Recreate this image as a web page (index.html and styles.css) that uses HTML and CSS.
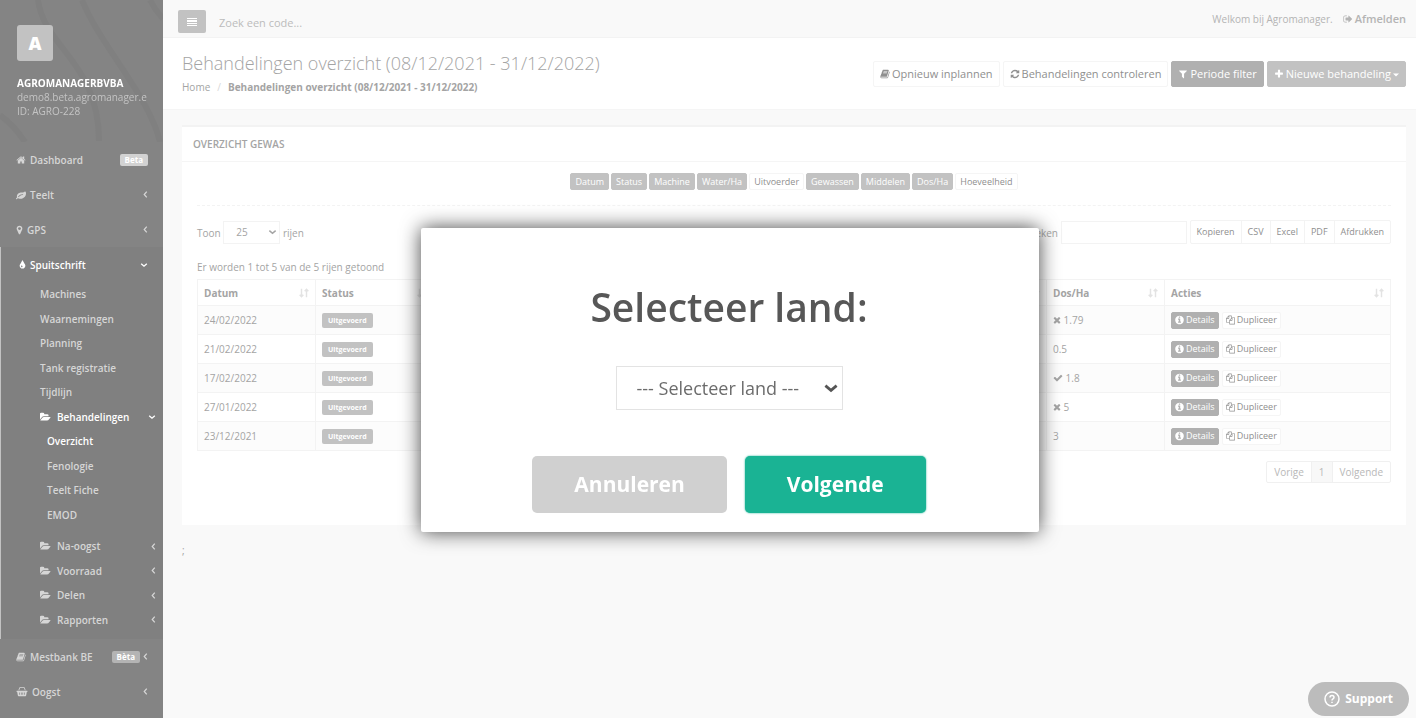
FILE: index.html
```html
<!DOCTYPE html>
<html lang="nl">
<head>
    <meta charset="UTF-8">
    <title>Behandelingen overzicht</title>
    <link rel="stylesheet" href="styles.css">
</head>
<body>
    <svg class="sprite" aria-hidden="true">
        <symbol id="home" viewBox="0 0 1792 1792"><path d="M1472 992v480q0 26-19 45t-45 19h-384v-384h-256v384h-384q-26 0-45-19t-19-45v-480q0-1 .5-3t.5-3l575-474 575 474q1 2 1 6zm223-69l-62 74q-8 9-21 11h-3q-13 0-21-7l-692-577-692 577q-12 8-24 7-13-2-21-11l-62-74q-8-10-7-23.5t11-21.5l719-599q32-26 76-26t76 26l244 204v-195q0-14 9-23t23-9h192q14 0 23 9t9 23v408l219 182q10 8 11 21.5t-7 23.5z"/></symbol>
        <symbol id="leaf" viewBox="0 0 1792 1792"><path d="M1280 832q0-26-19-45t-45-19q-172 0-318 49.5t-259.5 134-235.5 219.5q-19 21-19 45 0 26 19 45t45 19q24 0 45-19 27-24 74-71t67-66q137-124 268.5-176t313.5-52q26 0 45-19t19-45zm512-198q0 95-20 193-46 224-184.5 383t-357.5 268q-214 108-438 108-148 0-286-47-15-5-88-42t-96-37q-16 0-39.5 32t-45 70-52.5 70-60 32q-43 0-63.5-17.5t-45.5-59.5q-2-4-6-11t-5.5-10-3-9.5-1.5-13.5q0-35 31-73.5t68-65.5 68-56 31-48q0-4-14-38t-16-44q-9-51-9-104 0-115 43.5-220t119-184.5 170.5-139 204-95.5q55-18 145-25.5t179.5-9 178.5-6 163.5-24 113.5-56.5l29.5-29.5 29.5-28 27-20 36.5-16 43.5-4.5q39 0 70.5 46t47.5 112 24 124 8 96z"/></symbol>
        <symbol id="marker" viewBox="384 0 1024 1792"><path d="M1152 640q0-106-75-181t-181-75-181 75-75 181 75 181 181 75 181-75 75-181zm256 0q0 109-33 179l-364 774q-16 33-47.5 52t-67.5 19-67.5-19-46.5-52l-365-774q-33-70-33-179 0-212 150-362t362-150 362 150 150 362z"/></symbol>
        <symbol id="tint" viewBox="384 0 1024 1792"><path d="M896 1152q0-36-20-69-1-1-15.5-22.5t-25.5-38-25-44-21-50.5q-4-16-21-16t-21 16q-7 23-21 50.5t-25 44-25.5 38-15.5 22.5q-20 33-20 69 0 53 37.5 90.5t90.5 37.5 90.5-37.5 37.5-90.5zm512-128q0 212-150 362t-362 150-362-150-150-362q0-145 81-275 6-9 62.5-90.5t101-151 99.5-178 83-201.5q9-30 34-47t51-17 51.5 17 33.5 47q28 93 83 201.5t99.5 178 101 151 62.5 90.5q81 127 81 275z"/></symbol>
        <symbol id="book" viewBox="0 0 1792 1792"><path d="M1703 478q40 57 18 129l-275 906q-19 64-76.5 107.5t-122.5 43.5h-923q-77 0-148.5-53.5t-99.5-131.5q-24-67-2-127 0-4 3-27t4-37q1-8-3-21.5t-3-19.5q2-11 8-21t16.5-23.5 16.5-23.5q23-38 45-91.5t30-91.5q3-10 .5-30t-.5-28q3-11 17-28t17-23q21-36 42-92t25-90q1-9-2.5-32t.5-28q4-13 22-30.5t22-22.5q19-26 42.5-84.5t27.5-96.5q1-8-3-25.5t-2-26.5q2-8 9-18t18-23 17-21q8-12 16.5-30.5t15-35 16-36 19.5-32 26.5-23.5 36-11.5 47.5 5.5l-1 3q38-9 51-9h761q74 0 114 56t18 130l-274 906q-36 119-71.5 153.5t-128.5 34.5h-869q-27 0-38 15-11 16-1 43 24 70 144 70h923q29 0 56-15.5t35-41.5l300-987q7-22 5-57 38 15 59 43zm-1064 2q-4 13 2 22.5t20 9.5h608q13 0 25.5-9.5t16.5-22.5l21-64q4-13-2-22.5t-20-9.5h-608q-13 0-25.5 9.5t-16.5 22.5zm-83 256q-4 13 2 22.5t20 9.5h608q13 0 25.5-9.5t16.5-22.5l21-64q4-13-2-22.5t-20-9.5h-608q-13 0-25.5 9.5t-16.5 22.5z"/></symbol>
        <symbol id="basket" viewBox="0 0 1792 1792"><path fill-rule="evenodd" d="M64 768h1664q64 0 64 64v64q0 64-64 64h-50l-108 600q-14 104-124 104H346q-110 0-124-104L114 960H64q-64 0-64-64v-64q0-64 64-64zM420 1060l30 380h110l-30-380zM720 1060v380h110v-380zM970 1060v380h110v-380zM1270 1060l-30 380h110l30-380z"/><path d="M300 700L480 240q30-70 110-70h620q80 0 110 70l180 460h-140L1200 300H600L440 700z"/></symbol>
        <symbol id="folder" viewBox="0 0 1850 1792"><path d="M1815 952q0 31-31 66l-336 396q-43 51-120.5 86.5t-143.5 35.5h-1088q-34 0-60.5-13t-26.5-43q0-31 31-66l336-396q43-51 120.5-86.5t143.5-35.5h1088q34 0 60.5 13t26.5 43zm-343-344v160h-832q-94 0-197 47.5t-164 119.5l-337 396-5 6q0-4-.5-12.5t-.5-12.5v-960q0-92 66-158t158-66h320q92 0 158 66t66 158v32h544q92 0 158 66t66 158z"/></symbol>
        <symbol id="refresh" viewBox="0 0 1792 1792"><path d="M1639 1056q0 5-1 7-64 268-268 434.5t-478 166.5q-146 0-282.5-55t-243.5-157l-129 129q-19 19-45 19t-45-19-19-45v-448q0-26 19-45t45-19h448q26 0 45 19t19 45-19 45l-137 137q71 66 161 102t187 36q134 0 250-65t186-179q11-17 53-117 8-23 30-23h192q13 0 22.5 9.5t9.5 22.5zm25-800v448q0 26-19 45t-45 19h-448q-26 0-45-19t-19-45 19-45l138-138q-148-137-349-137-134 0-250 65t-186 179q-11 17-53 117-8 23-30 23h-199q-13 0-22.5-9.5t-9.5-22.5v-7q65-268 270-434.5t480-166.5q146 0 284 55.5t245 156.5l130-129q19-19 45-19t45 19 19 45z"/></symbol>
        <symbol id="filter" viewBox="128 0 1536 1792"><path d="M1595 295q17 41-14 70l-493 493v742q0 42-39 59-13 5-25 5-27 0-45-19l-256-256q-19-19-19-45v-486l-493-493q-31-29-14-70 17-39 59-39h1280q42 0 59 39z"/></symbol>
        <symbol id="plus" viewBox="128 0 1536 1792"><path d="M1600 736v192q0 40-28 68t-68 28h-416v416q0 40-28 68t-68 28h-192q-40 0-68-28t-28-68v-416h-416q-40 0-68-28t-28-68v-192q0-40 28-68t68-28h416v-416q0-40 28-68t68-28h192q40 0 68 28t28 68v416h416q40 0 68 28t28 68z"/></symbol>
        <symbol id="times" viewBox="192 0 1408 1792"><path d="M1490 1322q0 40-28 68l-136 136q-28 28-68 28t-68-28l-294-294-294 294q-28 28-68 28t-68-28l-136-136q-28-28-28-68t28-68l294-294-294-294q-28-28-28-68t28-68l136-136q28-28 68-28t68 28l294 294 294-294q28-28 68-28t68 28l136 136q28 28 28 68t-28 68l-294 294 294 294q28 28 28 68z"/></symbol>
        <symbol id="check" viewBox="0 0 1792 1792"><path d="M1671 566q0 40-28 68l-724 724-136 136q-28 28-68 28t-68-28l-136-136-362-362q-28-28-28-68t28-68l136-136q28-28 68-28t68 28l294 295 656-657q28-28 68-28t68 28l136 136q28 28 28 68z"/></symbol>
        <symbol id="info" viewBox="128 0 1536 1792"><path d="M1152 1376v-160q0-14-9-23t-23-9h-96v-512q0-14-9-23t-23-9h-320q-14 0-23 9t-9 23v160q0 14 9 23t23 9h96v320h-96q-14 0-23 9t-9 23v160q0 14 9 23t23 9h448q14 0 23-9t9-23zm-128-896v-160q0-14-9-23t-23-9h-192q-14 0-23 9t-9 23v160q0 14 9 23t23 9h192q14 0 23-9t9-23zm640 416q0 209-103 385.5t-279.5 279.5-385.5 103-385.5-103-279.5-279.5-103-385.5 103-385.5 279.5-279.5 385.5-103 385.5 103 279.5 279.5 103 385.5z"/></symbol>
        <symbol id="files" viewBox="0 0 1792 1792"><path d="M1696 384q40 0 68 28t28 68v1216q0 40-28 68t-68 28h-960q-40 0-68-28t-28-68v-288h-544q-40 0-68-28t-28-68v-672q0-40 20-88t48-76l408-408q28-28 76-48t88-20h416q40 0 68 28t28 68v328q68-40 128-40h416zm-544 213l-299 299h299v-299zm-640-384l-299 299h299v-299zm196 647l316-316v-416h-384v416q0 40-28 68t-68 28h-416v640h512v-256q0-40 20-88t48-76zm956 804v-1152h-384v416q0 40-28 68t-68 28h-416v640h896z"/></symbol>
        <symbol id="signout" viewBox="0 0 1792 1792"><path d="M704 1440q0 4 1 20t.5 26.5-3 23.5-10 19.5-20.5 6.5h-320q-119 0-203.5-84.5t-84.5-203.5v-704q0-119 84.5-203.5t203.5-84.5h320q13 0 22.5 9.5t9.5 22.5q0 4 1 20t.5 26.5-3 23.5-10 19.5-20.5 6.5h-320q-66 0-113 47t-47 113v704q0 66 47 113t113 47h312l11.5 1 11.5 3 8 5.5 7 9 2 13.5zm928-544q0 26-19 45l-544 544q-19 19-45 19t-45-19-19-45v-288h-448q-26 0-45-19t-19-45v-384q0-26 19-45t45-19h448v-288q0-26 19-45t45-19 45 19l544 544q19 19 19 45z"/></symbol>
        <symbol id="bars" viewBox="0 0 10 10"><path d="M0 1h10v1H0zM0 3h10v2H0zM0 6h10v1H0zM0 8h10v1H0z"/></symbol>
        <symbol id="left" viewBox="0 0 6 10"><path d="M4.500 1.500L1.500 5l3 3.500" fill="none" stroke="currentColor" stroke-width="1.500"/></symbol>
        <symbol id="down" viewBox="0 0 10 6"><path d="M1.500 1.500L5 4.500l3.500-3" fill="none" stroke="currentColor" stroke-width="1.700"/></symbol>
        <symbol id="sort" viewBox="0 0 12 12"><path d="M3 1v9M.800 8L3 10.500 5.200 8M9 11V2M6.800 4L9 1.500 11.200 4" fill="none" stroke="currentColor" stroke-width="1.700"/></symbol>
        <symbol id="caret" viewBox="0 0 6 4"><path d="M0 .500h6L3 3.500z"/></symbol>
    </svg>

    <div class="wrapper">
        <nav class="sidebar">
            <div class="profile">
                <svg class="pattern" viewBox="0 0 163 143" preserveAspectRatio="none" aria-hidden="true">
                    <path d="M38 0c6 48 61 62 61 142M82 0c16 42 68 98 78 143M0 116q14 10 25 27M150 0q5 10 13 19"/>
                </svg>
                <div class="avatar">A</div>
                <strong>AGROMANAGERBVBA</strong>
                <span>demo8.beta.agromanager.e</span>
                <span>ID: AGRO-228</span>
            </div>
            <ul class="menu">
                <li><a href="#"><svg class="icon"><use href="#home"/></svg>Dashboard<span class="badge">Beta</span></a></li>
                <li><a href="#"><svg class="icon"><use href="#leaf"/></svg>Teelt<svg class="arrow"><use href="#left"/></svg></a></li>
                <li><a href="#"><svg class="icon narrow"><use href="#marker"/></svg>GPS<svg class="arrow"><use href="#left"/></svg></a></li>
                <li class="open">
                    <a href="#" class="current"><svg class="icon narrow"><use href="#tint"/></svg>Spuitschrift<svg class="arrow down"><use href="#down"/></svg></a>
                    <ul class="submenu">
                        <li><a href="#">Machines</a></li>
                        <li><a href="#">Waarnemingen</a></li>
                        <li><a href="#">Planning</a></li>
                        <li><a href="#">Tank registratie</a></li>
                        <li><a href="#">Tijdlijn</a></li>
                        <li>
                            <a href="#" class="current"><svg class="icon folder"><use href="#folder"/></svg>Behandelingen<svg class="arrow down"><use href="#down"/></svg></a>
                            <ul class="thirdmenu">
                                <li><a href="#" class="current">Overzicht</a></li>
                                <li><a href="#">Fenologie</a></li>
                                <li><a href="#">Teelt Fiche</a></li>
                                <li><a href="#">EMOD</a></li>
                            </ul>
                        </li>
                        <li><a href="#"><svg class="icon folder"><use href="#folder"/></svg>Na-oogst<svg class="arrow"><use href="#left"/></svg></a></li>
                        <li><a href="#"><svg class="icon folder"><use href="#folder"/></svg>Voorraad<svg class="arrow"><use href="#left"/></svg></a></li>
                        <li><a href="#"><svg class="icon folder"><use href="#folder"/></svg>Delen<svg class="arrow"><use href="#left"/></svg></a></li>
                        <li><a href="#"><svg class="icon folder"><use href="#folder"/></svg>Rapporten<svg class="arrow"><use href="#left"/></svg></a></li>
                    </ul>
                </li>
                <li><a href="#"><svg class="icon"><use href="#book"/></svg>Mestbank BE<span class="badge dark">Bèta</span><svg class="arrow near"><use href="#left"/></svg></a></li>
                <li><a href="#"><svg class="icon basket"><use href="#basket"/></svg>Oogst<svg class="arrow"><use href="#left"/></svg></a></li>
            </ul>
        </nav>

        <div class="page">
            <header class="topbar">
                <button class="toggle" aria-label="Menu"><svg class="icon"><use href="#bars"/></svg></button>
                <input class="search" type="text" placeholder="Zoek een code..." aria-label="Zoek een code">
                <span class="welcome">Welkom bij Agromanager.</span>
                <a href="#" class="logout"><svg class="icon"><use href="#signout"/></svg>Afmelden</a>
            </header>

            <div class="heading">
                <div>
                    <h1>Behandelingen overzicht (08/12/2021 - 31/12/2022)</h1>
                    <div class="breadcrumb"><a href="#">Home</a><span>/</span><strong>Behandelingen overzicht (08/12/2021 - 31/12/2022)</strong></div>
                </div>
                <div class="actions">
                    <button class="btn"><svg class="icon"><use href="#book"/></svg>Opnieuw inplannen</button>
                    <button class="btn"><svg class="icon"><use href="#refresh"/></svg>Behandelingen controleren</button>
                    <button class="btn dark"><svg class="icon"><use href="#filter"/></svg>Periode filter</button>
                    <button class="btn grey"><svg class="icon"><use href="#plus"/></svg>Nieuwe behandeling<svg class="caret"><use href="#caret"/></svg></button>
                </div>
            </div>

            <main class="content">
                <section class="panel">
                    <h2>OVERZICHT GEWAS</h2>
                    <div class="panel-body">
                        <div class="columns">
                            <button class="btn-xs grey">Datum</button>
                            <button class="btn-xs grey">Status</button>
                            <button class="btn-xs grey">Machine</button>
                            <button class="btn-xs grey">Water/Ha</button>
                            <button class="btn-xs">Uitvoerder</button>
                            <button class="btn-xs grey">Gewassen</button>
                            <button class="btn-xs grey">Middelen</button>
                            <button class="btn-xs grey">Dos/Ha</button>
                            <button class="btn-xs">Hoeveelheid</button>
                        </div>
                        <div class="tools">
                            <label class="length">Toon
                                <span class="select"><select><option>25</option></select><svg><use href="#down"/></svg></span>
                                rijen</label>
                            <label class="find">Zoeken <input type="search"></label>
                            <div class="group">
                                <button>Kopieren</button><button>CSV</button><button>Excel</button><button>PDF</button><button>Afdrukken</button>
                            </div>
                        </div>
                        <p class="info">Er worden 1 tot 5 van de 5 rijen getoond</p>
                        <table>
                            <colgroup><col class="c-date"><col class="c-date"><col><col><col><col><col class="c-date"><col class="c-act"></colgroup>
                            <thead>
                                <tr>
                                    <th>Datum<svg><use href="#sort"/></svg></th>
                                    <th>Status<svg><use href="#sort"/></svg></th>
                                    <th aria-label="Machine"><svg><use href="#sort"/></svg></th>
                                    <th aria-label="Water/Ha"><svg><use href="#sort"/></svg></th>
                                    <th aria-label="Gewassen"><svg><use href="#sort"/></svg></th>
                                    <th aria-label="Middelen"><svg><use href="#sort"/></svg></th>
                                    <th>Dos/Ha<svg><use href="#sort"/></svg></th>
                                    <th>Acties<svg><use href="#sort"/></svg></th>
                                </tr>
                            </thead>
                            <tbody>
                                <tr>
                                    <td>24/02/2022</td><td><span class="label">Uitgevoerd</span></td><td></td><td></td><td></td><td></td>
                                    <td><svg class="icon narrow"><use href="#times"/></svg> 1.79</td>
                                    <td><button class="btn-xs dark"><svg class="icon"><use href="#info"/></svg>Details</button><button class="btn-xs"><svg class="icon"><use href="#files"/></svg>Dupliceer</button></td>
                                </tr>
                                <tr>
                                    <td>21/02/2022</td><td><span class="label">Uitgevoerd</span></td><td></td><td></td><td></td><td></td>
                                    <td>0.5</td>
                                    <td><button class="btn-xs dark"><svg class="icon"><use href="#info"/></svg>Details</button><button class="btn-xs"><svg class="icon"><use href="#files"/></svg>Dupliceer</button></td>
                                </tr>
                                <tr>
                                    <td>17/02/2022</td><td><span class="label">Uitgevoerd</span></td><td></td><td></td><td></td><td></td>
                                    <td><svg class="icon"><use href="#check"/></svg> 1.8</td>
                                    <td><button class="btn-xs dark"><svg class="icon"><use href="#info"/></svg>Details</button><button class="btn-xs"><svg class="icon"><use href="#files"/></svg>Dupliceer</button></td>
                                </tr>
                                <tr>
                                    <td>27/01/2022</td><td><span class="label">Uitgevoerd</span></td><td></td><td></td><td></td><td></td>
                                    <td><svg class="icon narrow"><use href="#times"/></svg> 5</td>
                                    <td><button class="btn-xs dark"><svg class="icon"><use href="#info"/></svg>Details</button><button class="btn-xs"><svg class="icon"><use href="#files"/></svg>Dupliceer</button></td>
                                </tr>
                                <tr>
                                    <td>23/12/2021</td><td><span class="label">Uitgevoerd</span></td><td></td><td></td><td></td><td></td>
                                    <td>3</td>
                                    <td><button class="btn-xs dark"><svg class="icon"><use href="#info"/></svg>Details</button><button class="btn-xs"><svg class="icon"><use href="#files"/></svg>Dupliceer</button></td>
                                </tr>
                            </tbody>
                        </table>
                        <div class="pagination">
                            <a href="#">Vorige</a><a href="#" class="active">1</a><a href="#">Volgende</a>
                        </div>
                    </div>
                </section>
                <p class="stray">;</p>
            </main>
        </div>
    </div>

    <div class="overlay">
        <div class="modal" role="dialog" aria-labelledby="modal-title">
            <h2 id="modal-title">Selecteer land:</h2>
            <span class="select"><select aria-labelledby="modal-title"><option>--- Selecteer land ---</option></select><svg><use href="#down"/></svg></span>
            <div class="buttons">
                <button class="cancel">Annuleren</button>
                <button class="confirm">Volgende</button>
            </div>
        </div>
    </div>

    <button class="support">
        <svg viewBox="0 0 16 16" aria-hidden="true"><circle cx="8" cy="8" r="7"/><path d="M6 6.500q0-2 2-2t2 1.800q0 1-1 1.600T8 9.500M8 10.700v1.300"/></svg>
        Support
    </button>
</body>
</html>
```

FILE: styles.css
```css
* {
    box-sizing: border-box;
    margin: 0;
    padding: 0;
}

body {
    font-family: "Open Sans", sans-serif;
    font-size: 10px;
    line-height: 14px;
    color: #a4a4a4;
    background-color: #f9f9f9;
}

ul {
    list-style: none;
}

a {
    color: inherit;
    text-decoration: none;
}

button,
input,
select {
    font: inherit;
    color: inherit;
    background: none;
    border: none;
    outline: none;
}

svg {
    fill: currentColor;
    flex: none;
}

.sprite {
    display: none;
}

.icon {
    width: 10px;
    height: 10px;
    vertical-align: -1px;
}

.wrapper {
    display: flex;
    min-height: 100vh;
}

/* sidebar */
.sidebar {
    width: 163px;
    flex: none;
    background-color: #848484;
    color: #d6d6d6;
}

.profile {
    position: relative;
    display: flex;
    flex-direction: column;
    height: 142px;
    padding: 25px 16px 0 17px;
}

.pattern {
    position: absolute;
    left: 0;
    top: 0;
    width: 100%;
    height: 100%;
    fill: none;
    stroke: #808080;
    stroke-width: 6px;
}

.profile > * {
    z-index: 1;
}

.profile > .pattern {
    z-index: 0;
}

.avatar {
    width: 36px;
    height: 36px;
    margin-bottom: 15px;
    border-radius: 3px;
    background-color: #c2c2c2;
    color: #fff;
    font-size: 18px;
    font-weight: 800;
    line-height: 36px;
    text-align: center;
}

.profile strong {
    color: #fff;
}

.profile span {
    color: #c4c4c4;
}

.menu {
    font-weight: 600;
}

.menu a {
    display: flex;
    align-items: center;
    height: 35px;
    padding: 0 15px 0 16px;
}

.menu .icon {
    margin-right: 4px;
}

.menu .icon.narrow {
    width: 7px;
}

.menu .icon.basket {
    width: 12px;
    height: 11px;
}

.menu .current {
    color: #fff;
}

.arrow {
    width: 5px;
    height: 9px;
    margin-left: auto;
}

.arrow.down {
    width: 8px;
    height: 6px;
}

.badge {
    margin-left: auto;
    padding: 0 5px;
    border-radius: 2px;
    background-color: #d2d2d2;
    color: #fff;
    font-size: 8px;
    font-weight: 700;
    line-height: 12px;
}

.badge.dark {
    background-color: #b4b4b4;
}

.arrow.near {
    margin-left: 3px;
}

.menu .open {
    padding-bottom: 7px;
    border-left: 1px solid #c2c2c2;
    background-color: #808080;
}

.open > .current {
    padding-left: 18px;
}

.menu .submenu a {
    height: 24px;
    padding: 0 7px 0 39px;
}

.menu .submenu li:nth-child(even) > a {
    height: 25px;
}

.submenu .icon.folder {
    width: 11px;
    margin-right: 6px;
}

.submenu .thirdmenu {
    padding-bottom: 7px;
}

.menu .submenu .thirdmenu a {
    padding-left: 46px;
}

/* top */
.page {
    flex: 1;
    min-width: 0;
}

.topbar {
    display: flex;
    align-items: center;
    height: 38px;
    padding: 0 10px 0 15px;
    border-bottom: 1px solid #f3f3f3;
    color: #b4b4b4;
}

.toggle {
    width: 28px;
    height: 23px;
    margin-top: 6px;
    border-radius: 2px;
    background-color: #c2c2c2;
    color: #fff;
}

.search {
    flex: 1;
    margin: 9px 13px 0;
    font-size: 11px;
}

.search::placeholder {
    color: #bcbcbc;
}

.logout {
    margin-left: 10px;
    font-size: 11px;
    font-weight: 600;
}

.logout .icon {
    margin-right: 2px;
}

.heading {
    display: flex;
    justify-content: space-between;
    height: 72px;
    padding: 11px 10px 0 19px;
    border-bottom: 1px solid #f5f5f5;
    background-color: #fff;
}

h1 {
    font-size: 18px;
    font-weight: 300;
    line-height: 28px;
}

.breadcrumb {
    display: flex;
    gap: 7px;
    margin-top: 3px;
}

.breadcrumb span {
    color: #d8d8d8;
}

.actions {
    display: flex;
    gap: 3px;
    margin-top: 12px;
}

.btn {
    height: 26px;
    padding: 0 6px 1px;
    border: 1px solid #f5f5f5;
    border-radius: 2px;
    background-color: #fff;
    color: #8f8f8f;
    font-size: 11px;
}

.btn .icon {
    margin-right: 2px;
}

.caret {
    width: 6px;
    height: 4px;
    margin-left: 2px;
    vertical-align: 1px;
}

.btn.dark,
.btn-xs.dark {
    background-color: #b0b0b0;
    border-color: #b0b0b0;
    color: #fff;
}

.btn.grey,
.btn-xs.grey {
    background-color: #c2c2c2;
    border-color: #c2c2c2;
    color: #fff;
}

/* panel */
.content {
    padding: 15px 10px 0 19px;
}

.panel {
    border-top: 2px solid #f3f3f3;
    background-color: #fff;
}

.panel h2 {
    padding: 10px 11px;
    border-bottom: 1px solid #f5f5f5;
    font-size: 10px;
    font-weight: 600;
    line-height: 14px;
}

.panel-body {
    padding: 11px 15px 42px;
}

.columns {
    display: flex;
    justify-content: center;
    gap: 2px;
    padding-bottom: 15px;
    border-bottom: 1px dashed #f3f3f3;
}

.btn-xs {
    height: 17px;
    padding: 0 4px;
    border: 1px solid #f5f5f5;
    border-radius: 2px;
    background-color: #fff;
    color: #8f8f8f;
    font-size: 9px;
    line-height: 14px;
}

.tools {
    display: flex;
    align-items: center;
    margin: 14px 0 16px;
}

.select {
    position: relative;
    display: inline-block;
}

.select select {
    appearance: none;
    border: 1px solid #f3f3f3;
    background-color: #fff;
}

.select svg {
    position: absolute;
    right: 3px;
    top: 50%;
    width: 9px;
    height: 6px;
    margin-top: -3px;
    pointer-events: none;
}

.length select {
    width: 57px;
    height: 23px;
    padding-left: 12px;
}

.find {
    margin-left: auto;
}

.find input {
    width: 126px;
    height: 23px;
    border: 1px solid #f3f3f3;
}

.group {
    display: flex;
    margin-left: 3px;
    border: 1px solid #f3f3f3;
    border-radius: 2px;
    color: #8f8f8f;
    font-size: 9px;
}

.group button {
    height: 22px;
    padding: 0 6px;
}

.group button + button {
    border-left: 1px solid #f3f3f3;
}

.info {
    margin-bottom: 5px;
}

table {
    width: 100%;
    table-layout: fixed;
    border-collapse: collapse;
}

.c-date {
    width: 118px;
}

.c-act {
    width: 226px;
}

th,
td {
    height: 29px;
    padding: 0 6px;
    border: 1px solid #f3f3f3;
    text-align: left;
    white-space: nowrap;
}

th {
    height: 26px;
}

th svg {
    float: right;
    width: 10px;
    height: 10px;
    margin-top: 2px;
    color: #e3e3e3;
}

tbody tr:nth-child(odd) {
    background-color: #fcfcfc;
}

td .icon.narrow {
    width: 8px;
}

td .btn-xs {
    padding: 0 3px;
}

td .btn-xs + .btn-xs {
    margin-left: 3px;
}

.btn-xs .icon {
    width: 9px;
    margin-right: 2px;
    vertical-align: -2px;
}

.label {
    display: inline-block;
    padding: 0 6px;
    border-radius: 2px;
    background-color: #c2c2c2;
    color: #fff;
    font-size: 7px;
    font-weight: 700;
    line-height: 15px;
}

.pagination {
    display: flex;
    width: fit-content;
    margin: 10px 0 0 auto;
    border: 1px solid #f0f0f0;
    border-radius: 2px;
    color: #b8b8b8;
}

.pagination a {
    padding: 3px 7px;
}

.pagination .active {
    border: solid #f0f0f0;
    border-width: 0 1px;
    background-color: #f8f8f8;
}

.stray {
    margin-top: 18px;
}

/* dialog */
.overlay {
    position: fixed;
    inset: 0;
    display: flex;
    align-items: center;
    justify-content: center;
    padding: 42px 0 0 44px;
}

.modal {
    display: flex;
    flex-direction: column;
    align-items: center;
    width: 618px;
    padding: 51px 22px 19px 20px;
    border-radius: 2px;
    background-color: #fff;
    box-shadow: 0 0 20px #444;
}

.modal h2 {
    color: #575757;
    font-size: 39px;
    font-weight: 600;
    line-height: 56px;
}

.modal .select {
    margin: 31px 0 46px;
    color: #6c6c6c;
    font-size: 18px;
}

.modal select {
    width: 227px;
    height: 44px;
    padding-left: 20px;
    border-color: #e3e3e3;
}

.modal .select svg {
    right: 4px;
    width: 16px;
    height: 10px;
    margin-top: -5px;
    color: #555;
}

.buttons {
    display: flex;
    gap: 18px;
    color: #fff;
    font-size: 21px;
    font-weight: 700;
}

.buttons button {
    height: 57px;
    padding: 0 42px 2px;
    border-radius: 5px;
}

.cancel {
    background-color: #d0d0d0;
}

.confirm {
    background-color: #1ab394;
    box-shadow: 0 0 2px #1ab394;
}

.support {
    position: fixed;
    right: 7px;
    bottom: 2px;
    display: flex;
    align-items: center;
    gap: 5px;
    height: 34px;
    padding: 0 16px;
    border-radius: 18px;
    background-color: #bcbcbc;
    color: #fff;
    font-size: 12px;
    font-weight: 700;
}

.support svg {
    width: 16px;
    height: 16px;
    fill: none;
    stroke: currentColor;
    stroke-width: 1.500;
}
```
